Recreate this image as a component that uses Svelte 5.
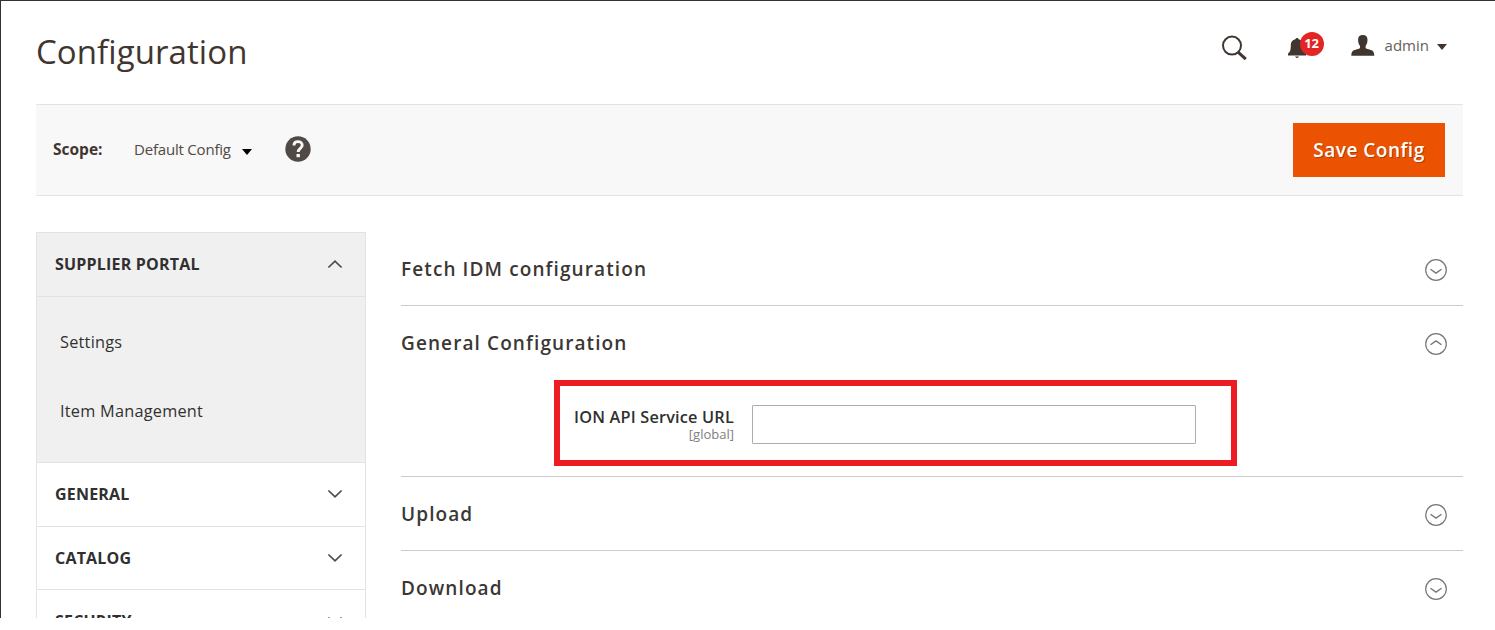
<script>
  const links = ['Settings', 'Item Management'];
  const tabs = ['General', 'Catalog', 'Security'];
  let serviceUrl = $state('');
</script>

{#snippet chevron(up)}
  <svg class="chevron" class:up width="16" height="10" viewBox="0 0 16 10" aria-hidden="true">
    <path d="M1.4 1.5 8 7.8 14.6 1.5" fill="none" stroke="#514943" stroke-width="1.7" />
  </svg>
{/snippet}

{#snippet toggle(up)}
  <svg class="toggle" class:up width="24" height="24" viewBox="0 0 24 24" aria-hidden="true">
    <circle cx="12" cy="12" r="10.3" fill="none" stroke="#777" stroke-width="1.2" />
    <path d="M6.5 11.2 12 15.1l5.5-3.9" fill="none" stroke="#777" stroke-width="1.4" />
  </svg>
{/snippet}

<div class="page">
  <header>
    <h1>Configuration</h1>
    <div class="tools">
      <svg class="search" width="27" height="26" viewBox="0 0 27 26" aria-hidden="true">
        <circle cx="11" cy="10.6" r="9" fill="none" stroke="#41362f" stroke-width="2" />
        <path d="m16.8 16.8 8 7.4" fill="none" stroke="#41362f" stroke-width="3" />
      </svg>
      <div class="bell">
        <svg width="18" height="21" viewBox="0 0 18 21" aria-hidden="true">
          <path d="M9 0c-1 0-1.500.6-1.600 1.300C4.400 1.900 2.800 4 2.800 7c0 5.200-.8 7.200-2.800 8.400V17.500h18v-2.100c-2-1.200-2.800-3.200-2.800-8.400 0-3-1.600-5.100-4.600-5.700C10.500.6 10 0 9 0ZM6.800 18.500h4.400L9 20.200Z" fill="#41362f" />
        </svg>
        <span class="badge">12</span>
      </div>
      <svg class="person" width="24" height="21" viewBox="0 0 24 21" aria-hidden="true">
        <path d="M11.800 0c3.300 0 4.700 1.800 4.700 4.800 0 2.700-.7 4.700-1.900 6.200v1.500c0 1 1.300 1.400 3.800 2.100 3.800 1 4.700 2.200 4.900 6.100H.3c.2-3.900 1.100-5.100 4.900-6.100 2.500-.7 3.800-1.100 3.800-2.100V11C7.800 9.500 7.100 7.500 7.100 4.800c0-3 1.400-4.800 4.700-4.800Z" fill="#41362f" />
      </svg>
      <span class="user">admin</span>
      <span class="caret"></span>
    </div>
  </header>

  <div class="toolbar">
    <span class="scope">Scope:</span>
    <span class="store">Default Config</span>
    <span class="caret black"></span>
    <svg class="help" width="26" height="26" viewBox="0 0 26 26" aria-hidden="true">
      <circle cx="13" cy="13" r="12.700" fill="#514943" />
      <path d="M9 9.500c0-2.600 1.600-3.900 4-3.900s4.200 1.400 4.200 3.600c0 3-4 3.300-4 6.700" fill="none" stroke="#f8f8f8" stroke-width="2.900" />
      <rect x="11.500" y="18" width="3.400" height="3.200" fill="#f8f8f8" />
    </svg>
    <button class="save">Save Config</button>
  </div>

  <div class="columns">
    <nav>
      <div class="tab open"><span>Supplier Portal</span>{@render chevron(true)}</div>
      <ul>
        {#each links as link}
          <li>{link}</li>
        {/each}
      </ul>
      {#each tabs as tab}
        <div class="tab"><span>{tab}</span>{@render chevron(false)}</div>
      {/each}
    </nav>

    <main>
      <section>
        <h2><span>Fetch IDM configuration</span>{@render toggle(false)}</h2>
      </section>
      <section class="expanded">
        <h2><span>General Configuration</span>{@render toggle(true)}</h2>
        <div class="field">
          <label for="service-url">
            <span class="name">ION API Service URL</span>
            <span class="level">[global]</span>
          </label>
          <input id="service-url" type="text" bind:value={serviceUrl} />
        </div>
      </section>
      <section>
        <h2><span>Upload</span>{@render toggle(false)}</h2>
      </section>
      <section>
        <h2><span>Download</span>{@render toggle(false)}</h2>
      </section>
    </main>
  </div>
</div>

<style>
  :global(body) {
    margin: 0;
    background: #fff;
  }
  .page {
    box-sizing: border-box;
    height: 618px;
    overflow: hidden;
    padding: 0 32px 0 35px;
    border-top: 1px solid #333;
    border-left: 1px solid #333;
    font-family: 'Open Sans', 'Noto Sans', sans-serif;
    color: #41362f;
    white-space: nowrap;
  }
  header {
    display: flex;
    justify-content: space-between;
    height: 103px;
  }
  h1 {
    margin: 28px 0 0;
    font-size: 33px;
    line-height: 46px;
    font-weight: 400;
    letter-spacing: 0.08px;
  }
  .tools {
    display: flex;
    align-items: flex-start;
    padding-right: 16px;
  }
  .search {
    margin: 34px 40px 0 0;
  }
  .bell {
    position: relative;
    width: 36px;
    margin: 37px 27px 0 0;
  }
  .bell svg {
    display: block;
  }
  .badge {
    position: absolute;
    left: 12px;
    top: -6px;
    width: 24px;
    height: 24px;
    border-radius: 50%;
    background: #e22626;
    color: #fff;
    font-size: 13px;
    line-height: 23px;
    font-weight: 700;
    text-align: center;
  }
  .person {
    margin: 34px 10px 0 0;
  }
  .user {
    margin-top: 33px;
    font-size: 15px;
    line-height: 22px;
    color: #676056;
  }
  .caret {
    width: 10px;
    height: 6px;
    margin: 43px 0 0 8px;
    background: #41362f;
    clip-path: polygon(0 0, 100% 0, 50% 100%);
  }
  .toolbar {
    box-sizing: border-box;
    display: flex;
    align-items: center;
    height: 92px;
    padding: 0 18px 0 17px;
    border-top: 1px solid #e3e3e3;
    border-bottom: 1px solid #e3e3e3;
    background: #f8f8f8;
  }
  .scope {
    width: 81px;
    padding-bottom: 3px;
    font-size: 15.500px;
    font-weight: 700;
  }
  .store {
    width: 97px;
    padding-bottom: 2px;
    font-size: 15px;
    letter-spacing: -0.2px;
    color: #514943;
  }
  .caret.black {
    margin: 4px 0 0 11px;
    background: #000;
  }
  .help {
    margin: 0 0 2px 33px;
  }
  .save {
    width: 152px;
    height: 54px;
    margin-left: auto;
    padding: 0;
    border: 0;
    background: #eb5202;
    color: #fff;
    font: 600 19px/54px 'Open Sans', 'Noto Sans', sans-serif;
    letter-spacing: 0.5px;
    text-shadow: 1px 1px 0 rgba(0, 0, 0, 0.25);
  }
  .columns {
    display: flex;
    gap: 35px;
    padding-top: 36px;
  }
  nav {
    box-sizing: border-box;
    width: 330px;
    border: 1px solid #e3e3e3;
  }
  .tab {
    box-sizing: border-box;
    display: flex;
    align-items: center;
    justify-content: space-between;
    height: 63.700px;
    padding: 0 22px 1px 18px;
    border-bottom: 1px solid #e3e3e3;
    font-size: 16px;
    font-weight: 700;
    letter-spacing: 0.2px;
    text-transform: uppercase;
    color: #303030;
  }
  .tab.open {
    height: 64px;
    padding-bottom: 2px;
    background: #f0f0f0;
  }
  .up {
    transform: scaleY(-1);
  }
  ul {
    box-sizing: border-box;
    height: 166px;
    margin: 0;
    padding: 11px 0 0 23px;
    border-bottom: 1px solid #e3e3e3;
    list-style: none;
    background: #f0f0f0;
  }
  li {
    height: 69px;
    font-size: 16.300px;
    line-height: 69px;
    letter-spacing: 0.24px;
    color: #303030;
  }
  main {
    flex: 1;
  }
  section {
    box-sizing: border-box;
    height: 74px;
    border-bottom: 1px solid #ccc;
  }
  .expanded {
    height: 171px;
  }
  h2 {
    display: flex;
    align-items: center;
    justify-content: space-between;
    height: 74px;
    margin: 0;
    padding-right: 15px;
    font-size: 19px;
    font-weight: 600;
    letter-spacing: 1.1px;
    color: #3b3734;
  }
  .toggle {
    margin-top: 2px;
  }
  .field {
    box-sizing: border-box;
    display: flex;
    align-items: center;
    width: 683px;
    height: 86px;
    padding-top: 2px;
    margin-left: 153px;
    border: 6px solid #ed1c24;
  }
  label {
    width: 174px;
    margin-right: 18px;
    text-align: right;
  }
  label span {
    display: block;
  }
  .name {
    font-size: 16.300px;
    line-height: 19px;
    padding-top: 1px;
    font-weight: 600;
    letter-spacing: 0.19px;
    color: #303030;
  }
  .level {
    font-size: 13px;
    line-height: 15px;
    color: #808080;
  }
  input {
    box-sizing: border-box;
    width: 444px;
    height: 39px;
    padding: 0 10px;
    border: 1px solid #adadad;
    border-radius: 1px;
    font: 16px 'Open Sans', sans-serif;
    outline: 0;
  }
</style>
